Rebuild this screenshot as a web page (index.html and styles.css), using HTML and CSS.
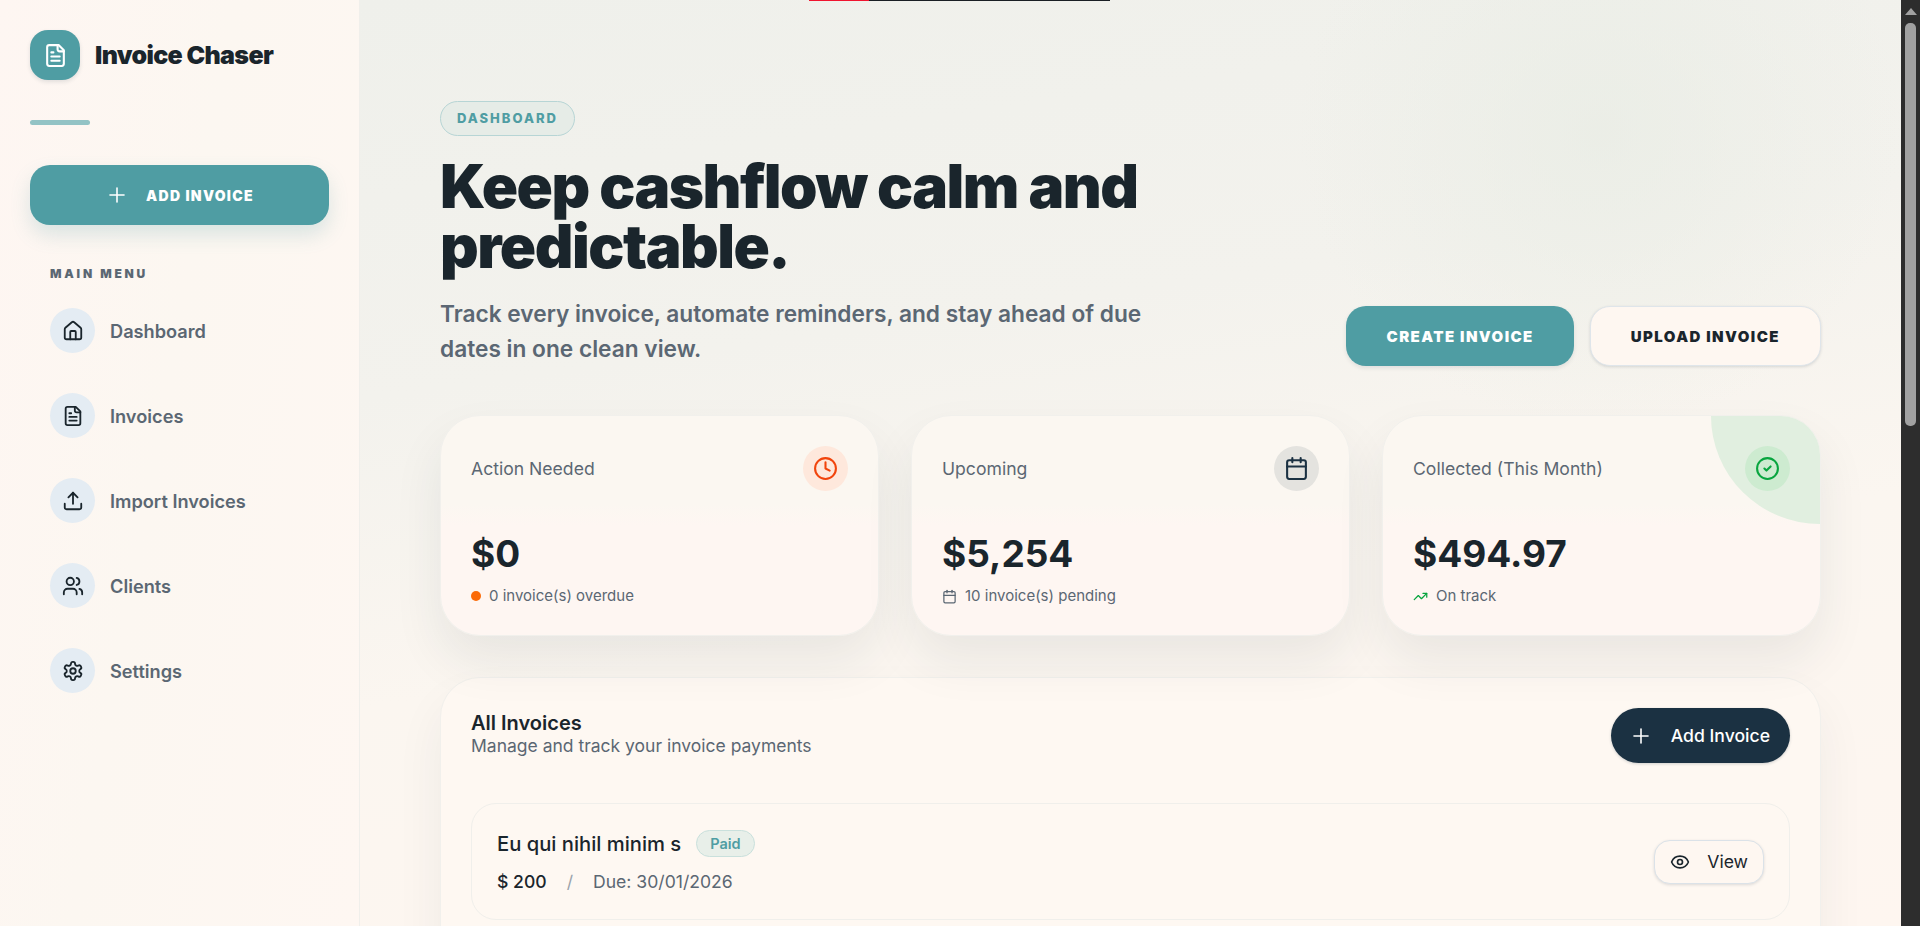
FILE: index.html
```html
<!DOCTYPE html>
<html lang="en">
<head>
    <meta charset="UTF-8">
    <meta name="viewport" content="width=device-width, initial-scale=1.0">
    <title>Invoice Chaser</title>
    <link rel="stylesheet" href="styles.css">
</head>
<body>
    <div class="app">
        <aside class="sidebar">
            <div class="brand">
                <div class="brand-icon">
                    <svg viewBox="0 0 24 24" width="25" height="25" class="icon"><path d="M15 2H6a2 2 0 0 0-2 2v16a2 2 0 0 0 2 2h12a2 2 0 0 0 2-2V7Z"/><path d="M14 2v4a2 2 0 0 0 2 2h4"/><path d="M10 9H8"/><path d="M16 13H8"/><path d="M16 17H8"/></svg>
                </div>
                <span class="brand-name">Invoice Chaser</span>
            </div>
            <div class="brand-rule"></div>
            <a href="#" class="side-add">
                <svg viewBox="0 0 24 24" width="24" height="24" class="icon plus"><path d="M5 12h14"/><path d="M12 5v14"/></svg>
                <span>ADD INVOICE</span>
            </a>
            <div class="menu-label">MAIN MENU</div>
            <nav class="menu">
                <a href="#" class="menu-item">
                    <span class="menu-icon"><svg viewBox="0 0 24 24" width="22" height="22" class="icon"><path d="M15 21v-8a1 1 0 0 0-1-1h-4a1 1 0 0 0-1 1v8"/><path d="M3 10a2 2 0 0 1 .709-1.528l7-5.999a2 2 0 0 1 2.582 0l7 5.999A2 2 0 0 1 21 10v9a2 2 0 0 1-2 2H5a2 2 0 0 1-2-2z"/></svg></span>
                    Dashboard
                </a>
                <a href="#" class="menu-item">
                    <span class="menu-icon"><svg viewBox="0 0 24 24" width="22" height="22" class="icon"><path d="M15 2H6a2 2 0 0 0-2 2v16a2 2 0 0 0 2 2h12a2 2 0 0 0 2-2V7Z"/><path d="M14 2v4a2 2 0 0 0 2 2h4"/><path d="M10 9H8"/><path d="M16 13H8"/><path d="M16 17H8"/></svg></span>
                    Invoices
                </a>
                <a href="#" class="menu-item">
                    <span class="menu-icon"><svg viewBox="0 0 24 24" width="22" height="22" class="icon"><path d="M21 15v4a2 2 0 0 1-2 2H5a2 2 0 0 1-2-2v-4"/><path d="m17 8-5-5-5 5"/><path d="M12 3v12"/></svg></span>
                    Import Invoices
                </a>
                <a href="#" class="menu-item">
                    <span class="menu-icon"><svg viewBox="0 0 24 24" width="22" height="22" class="icon"><path d="M16 21v-2a4 4 0 0 0-4-4H6a4 4 0 0 0-4 4v2"/><circle cx="9" cy="7" r="4"/><path d="M22 21v-2a4 4 0 0 0-3-3.87"/><path d="M16 3.13a4 4 0 0 1 0 7.75"/></svg></span>
                    Clients
                </a>
                <a href="#" class="menu-item">
                    <span class="menu-icon"><svg viewBox="0 0 24 24" width="22" height="22" class="icon"><path d="M12.22 2h-.44a2 2 0 0 0-2 2v.18a2 2 0 0 1-1 1.73l-.43.25a2 2 0 0 1-2 0l-.15-.08a2 2 0 0 0-2.73.73l-.22.38a2 2 0 0 0 .73 2.73l.15.1a2 2 0 0 1 1 1.72v.51a2 2 0 0 1-1 1.74l-.15.09a2 2 0 0 0-.73 2.73l.22.38a2 2 0 0 0 2.73.73l.15-.08a2 2 0 0 1 2 0l.43.25a2 2 0 0 1 1 1.73V20a2 2 0 0 0 2 2h.44a2 2 0 0 0 2-2v-.18a2 2 0 0 1 1-1.73l.43-.25a2 2 0 0 1 2 0l.15.08a2 2 0 0 0 2.73-.73l.22-.39a2 2 0 0 0-.73-2.73l-.15-.08a2 2 0 0 1-1-1.74v-.5a2 2 0 0 1 1-1.74l.15-.09a2 2 0 0 0 .73-2.73l-.22-.38a2 2 0 0 0-2.73-.73l-.15.08a2 2 0 0 1-2 0l-.43-.25a2 2 0 0 1-1-1.73V4a2 2 0 0 0-2-2z"/><circle cx="12" cy="12" r="3"/></svg></span>
                    Settings
                </a>
            </nav>
        </aside>

        <main class="main">
            <div class="top-progress"><span class="top-progress-fill"></span></div>

            <section class="hero">
                <div class="hero-text">
                    <span class="hero-badge">DASHBOARD</span>
                    <h1>Keep cashflow calm and predictable.</h1>
                    <p>Track every invoice, automate reminders, and stay ahead of due dates in one clean view.</p>
                </div>
                <div class="hero-actions">
                    <a href="#" class="btn btn-primary">CREATE INVOICE</a>
                    <a href="#" class="btn btn-light">UPLOAD INVOICE</a>
                </div>
            </section>

            <section class="stats">
                <div class="stat-card">
                    <div class="stat-head">
                        <span class="stat-title">Action Needed</span>
                        <span class="stat-icon orange"><svg viewBox="0 0 24 24" width="25" height="25" class="icon"><circle cx="12" cy="12" r="10"/><path d="M12 6v6l4 2"/></svg></span>
                    </div>
                    <div class="stat-value">$0</div>
                    <div class="stat-note"><span class="dot"></span>0 invoice(s) overdue</div>
                </div>
                <div class="stat-card">
                    <div class="stat-head">
                        <span class="stat-title">Upcoming</span>
                        <span class="stat-icon navy"><svg viewBox="0 0 24 24" width="25" height="25" class="icon"><path d="M8 2v4"/><path d="M16 2v4"/><rect x="3" y="4" width="18" height="18" rx="2"/><path d="M3 10h18"/></svg></span>
                    </div>
                    <div class="stat-value">$5,254</div>
                    <div class="stat-note"><svg viewBox="0 0 24 24" width="15" height="15" class="icon"><path d="M8 2v4"/><path d="M16 2v4"/><rect x="3" y="4" width="18" height="18" rx="2"/><path d="M3 10h18"/></svg>10 invoice(s) pending</div>
                </div>
                <div class="stat-card collected">
                    <span class="corner"></span>
                    <div class="stat-head">
                        <span class="stat-title">Collected (This Month)</span>
                        <span class="stat-icon green"><svg viewBox="0 0 24 24" width="25" height="25" class="icon"><circle cx="12" cy="12" r="10"/><path d="m9 12 2 2 4-4"/></svg></span>
                    </div>
                    <div class="stat-value">$494.97</div>
                    <div class="stat-note"><svg viewBox="0 0 24 24" width="15" height="15" class="icon trend"><path d="M16 7h6v6"/><path d="m22 7-8.5 8.5-5-5L2 17"/></svg>On track</div>
                </div>
            </section>

            <section class="panel">
                <div class="panel-head">
                    <div>
                        <h2>All Invoices</h2>
                        <p>Manage and track your invoice payments</p>
                    </div>
                    <a href="#" class="btn-dark">
                        <svg viewBox="0 0 24 24" width="24" height="24" class="icon plus"><path d="M5 12h14"/><path d="M12 5v14"/></svg>
                        Add Invoice
                    </a>
                </div>
                <div class="invoice-row">
                    <div>
                        <div class="invoice-title">
                            <span class="invoice-name">Eu qui nihil minim s</span>
                            <span class="status-pill">Paid</span>
                        </div>
                        <div class="invoice-meta">
                            <span class="invoice-amount">$ 200</span>
                            <span class="meta-slash">/</span>
                            <span>Due: 30/01/2026</span>
                        </div>
                    </div>
                    <a href="#" class="btn-view">
                        <svg viewBox="0 0 24 24" width="20" height="20" class="icon"><path d="M2.062 12.348a1 1 0 0 1 0-.696 10.75 10.75 0 0 1 19.876 0 1 1 0 0 1 0 .696 10.75 10.75 0 0 1-19.876 0"/><circle cx="12" cy="12" r="3"/></svg>
                        View
                    </a>
                </div>
            </section>
        </main>

        <div class="scrollbar">
            <span class="scroll-arrow"></span>
            <span class="scroll-thumb"></span>
        </div>
    </div>
</body>
</html>
```

FILE: styles.css
```css
:root {
    --teal: #4f9da3;
    --navy: #1b3142;
    --ink: #1a252c;
    --muted: #5b6773;
    --line: #eaeae6;
    --cream: #fef7f1;
}

* {
    box-sizing: border-box;
}

html, body {
    height: 926px;
    margin: 0;
    overflow: hidden;
}

body {
    font-family: Inter, 'Noto Sans', sans-serif;
    color: var(--ink);
    background: var(--cream);
}

a {
    text-decoration: none;
    color: inherit;
}

.icon {
    fill: none;
    stroke: currentColor;
    stroke-width: 2;
    stroke-linecap: round;
    stroke-linejoin: round;
    flex: none;
}

.icon.plus {
    stroke-width: 1.6;
}

.app {
    display: flex;
    height: 926px;
}

/* Sidebar */
.sidebar {
    flex: 0 0 360px;
    padding: 30px 30px 0;
    background: linear-gradient(100deg, #fef6f2 0%, #fcf7f1 45%, #fef7f2 100%);
    border-right: 1px solid #f0efeb;
}

.brand {
    display: flex;
    align-items: center;
    gap: 15px;
}

.brand-icon {
    width: 50px;
    height: 50px;
    border-radius: 18px;
    background: var(--teal);
    color: #fff;
    display: flex;
    align-items: center;
    justify-content: center;
    box-shadow: 0 2px 4px rgba(27, 49, 66, 0.12);
}

.brand-name {
    font-size: 25px;
    font-weight: 900;
    letter-spacing: -0.65px;
}

.brand-rule {
    width: 60px;
    height: 5px;
    margin-top: 40px;
    border-radius: 3px;
    background: #93c3c5;
}

.side-add {
    display: flex;
    align-items: center;
    justify-content: center;
    gap: 17px;
    height: 60px;
    margin-top: 40px;
    border-radius: 20px;
    background: var(--teal);
    color: #fff;
    font-size: 14px;
    font-weight: 900;
    letter-spacing: 1.3px;
    box-shadow: 0 10px 20px rgba(79, 157, 163, 0.2);
}

.menu-label {
    margin: 41px 0 0 20px;
    font-size: 12px;
    font-weight: 900;
    letter-spacing: 2.8px;
    line-height: 15px;
    color: var(--muted);
}

.menu {
    display: flex;
    flex-direction: column;
    gap: 40px;
    margin: 27px 0 0 20px;
}

.menu-item {
    display: flex;
    align-items: center;
    gap: 15px;
    height: 45px;
    font-size: 18.2px;
    font-weight: 600;
    color: var(--muted);
}

.menu-icon {
    width: 45px;
    height: 45px;
    border-radius: 50%;
    background: #e4ecf3;
    color: var(--ink);
    display: flex;
    align-items: center;
    justify-content: center;
}

/* Main column */
.main {
    position: relative;
    flex: 1;
    min-width: 0;
    padding: 101px 80px 0;
    background:
        radial-gradient(circle at 1240px 130px, rgba(232, 236, 228, 0.7) 0, rgba(232, 236, 228, 0) 300px),
        linear-gradient(172deg, #eff0eb 0%, #f3f2ed 35%, #fbf6f0 62%, #fef6f0 100%);
    overflow: hidden;
}

.top-progress {
    position: absolute;
    top: 0;
    left: 449px;
    width: 301px;
    height: 1px;
    background: #1a1f24;
}

.top-progress-fill {
    display: block;
    width: 60px;
    height: 1px;
    background: #f0142f;
}

.hero {
    display: flex;
    justify-content: space-between;
    align-items: flex-end;
}

.hero-text {
    width: 720px;
}

.hero-badge {
    display: inline-block;
    height: 35px;
    padding: 0 16px;
    border: 1px solid #b7d5d5;
    border-radius: 18px;
    background: #e6ece7;
    color: var(--teal);
    font-size: 13px;
    font-weight: 800;
    letter-spacing: 2px;
    line-height: 32px;
}

.hero h1 {
    margin: 20px 0 0;
    font-size: 60px;
    font-weight: 900;
    line-height: 60px;
    letter-spacing: -1.5px;
}

.hero p {
    margin: 20px 0 0;
    font-size: 22.7px;
    font-weight: 600;
    line-height: 35px;
    color: var(--muted);
}

.hero-actions {
    display: flex;
    gap: 16px;
}

.btn {
    display: flex;
    align-items: center;
    height: 60px;
    padding: 0 40px;
    border-radius: 20px;
    font-size: 15px;
    font-weight: 900;
    letter-spacing: 1.45px;
}

.btn-primary {
    background: var(--teal);
    color: #fff;
    box-shadow: 0 2px 4px rgba(27, 49, 66, 0.1);
}

.btn-light {
    background: var(--cream);
    border: 1px solid #dfe5ea;
    color: var(--ink);
    box-shadow: 0 1px 3px rgba(27, 49, 66, 0.15);
}

/* Stat cards */
.stats {
    display: grid;
    grid-template-columns: repeat(3, 1fr);
    gap: 32px;
    margin-top: 49px;
}

.stat-card {
    position: relative;
    height: 221px;
    padding: 30px;
    border: 1px solid #f1f0ec;
    border-radius: 40px;
    background: linear-gradient(180deg, #fbf7f1 0%, #fbf7f1 40%, #fef6f2 50%, #fef6f2 100%);
    box-shadow: 0 25px 50px rgba(27, 49, 66, 0.08);
    overflow: hidden;
}

.corner {
    position: absolute;
    top: 0;
    right: 0;
    width: 109px;
    height: 108px;
    border-bottom-left-radius: 100% 100%;
    background: #e1efe0;
}

.stat-head {
    position: relative;
    display: flex;
    justify-content: space-between;
    align-items: center;
    height: 45px;
}

.stat-title {
    font-size: 17.6px;
    color: var(--muted);
}

.stat-icon {
    width: 45px;
    height: 45px;
    border-radius: 50%;
    display: flex;
    align-items: center;
    justify-content: center;
}

.stat-icon.orange {
    background: #fee8dc;
    color: #f1440c;
}

.stat-icon.navy {
    background: #e4e3df;
    color: var(--navy);
}

.stat-icon.green {
    background: #cdebd0;
    color: #08a53f;
}

.stat-value {
    margin-top: 40px;
    font-size: 37px;
    font-weight: 700;
    line-height: 46px;
}

.stat-note {
    display: flex;
    align-items: center;
    gap: 8px;
    margin-top: 8px;
    font-size: 15px;
    line-height: 22px;
    color: var(--muted);
}

.dot {
    width: 10px;
    height: 10px;
    border-radius: 50%;
    background: #fb6a07;
}

.trend {
    color: #08a53f;
}

/* All invoices */
.panel {
    margin-top: 41px;
    padding: 30px;
    height: 400px;
    border: 1px solid #f1f0ec;
    border-radius: 40px;
    background: #fef8f2;
    box-shadow: 0 25px 50px rgba(27, 49, 66, 0.06);
}

.panel-head {
    display: flex;
    justify-content: space-between;
    align-items: flex-start;
}

.panel-head h2 {
    margin: 3px 0 0;
    font-size: 20px;
    font-weight: 600;
    line-height: 24px;
}

.panel-head p {
    margin: 0;
    font-size: 17.5px;
    line-height: 22px;
    color: var(--muted);
}

.btn-dark {
    display: flex;
    align-items: center;
    gap: 18px;
    height: 55px;
    padding: 0 20px 0 18px;
    border-radius: 28px;
    background: var(--navy);
    color: #fff;
    font-size: 17.6px;
    font-weight: 500;
    box-shadow: 0 1px 3px rgba(27, 49, 66, 0.2);
}

.invoice-row {
    display: flex;
    justify-content: space-between;
    align-items: center;
    height: 117px;
    margin-top: 40px;
    padding: 0 25px;
    border: 1px solid #f0efeb;
    border-radius: 25px;
}

.invoice-title {
    display: flex;
    align-items: center;
    gap: 15px;
}

.invoice-name {
    font-size: 20.2px;
    font-weight: 500;
}

.status-pill {
    height: 27px;
    padding: 0 13px;
    border: 1px solid #c9e0dc;
    border-radius: 14px;
    background: #e8efe9;
    color: var(--teal);
    font-size: 14.5px;
    font-weight: 600;
    line-height: 25px;
}

.invoice-meta {
    display: flex;
    gap: 20px;
    margin-top: 13px;
    font-size: 17.6px;
    line-height: 24px;
    color: var(--muted);
}

.invoice-amount {
    font-weight: 500;
    color: var(--ink);
}

.meta-slash {
    color: #9aa3ab;
}

.btn-view {
    display: flex;
    align-items: center;
    gap: 17px;
    height: 44px;
    padding: 0 15px;
    border: 1px solid #dbe2e8;
    border-radius: 16px;
    background: var(--cream);
    font-size: 17.6px;
    font-weight: 400;
    box-shadow: 0 1px 3px rgba(27, 49, 66, 0.15);
}

/* Scrollbar strip, drawn because the window shows one */
.scrollbar {
    flex: 0 0 19px;
    display: flex;
    flex-direction: column;
    align-items: center;
    padding-top: 8px;
    background: #2d2d2d;
}

.scroll-arrow {
    width: 0;
    height: 0;
    border-left: 6.5px solid transparent;
    border-right: 6.5px solid transparent;
    border-bottom: 7px solid #a1a1a1;
}

.scroll-thumb {
    width: 11px;
    height: 403px;
    margin-top: 8px;
    border-radius: 5px;
    background: #a1a1a1;
}
```
